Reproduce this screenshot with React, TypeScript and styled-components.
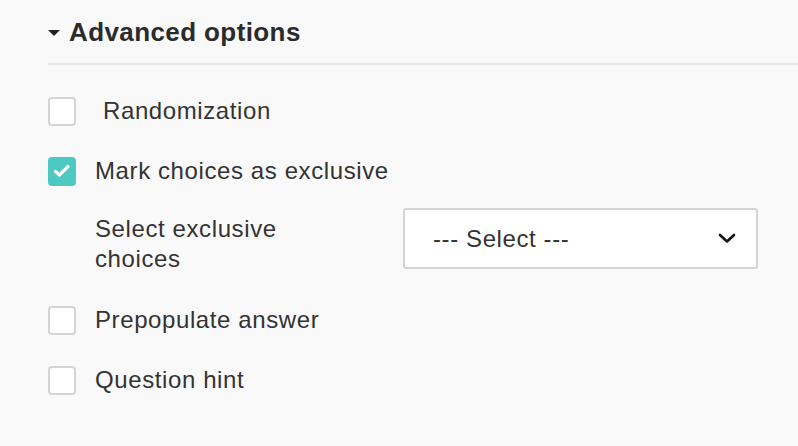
import React, { useState } from "react";
import styled, { createGlobalStyle } from "styled-components";

const Global = createGlobalStyle`
  html, body { margin: 0; padding: 0; background: #f9f9f9; }
  body { font-family: "Liberation Sans", Arial, Helvetica, sans-serif; color: #333; }
`;

const Panel = styled.div`
  padding: 17px 0 0 48px;
  width: 750px;
`;

const Header = styled.div`
  display: flex;
  align-items: center;
  gap: 9px;
  height: 30px;
  padding-bottom: 16px;
  border-bottom: 2px solid #e6e6e6;
`;

const Caret = styled.span`
  width: 0;
  height: 0;
  border-left: 6px solid transparent;
  border-right: 6px solid transparent;
  border-top: 6px solid #222;
  margin-top: 1px;
`;

const Title = styled.h3`
  margin: 0;
  font-size: 26px;
  letter-spacing: 0.4px;
  font-weight: bold;
  color: #2b2b2b;
`;

const List = styled.div`
  display: flex;
  flex-direction: column;
  padding-top: 31px;
`;

const Row = styled.label<{ $gap?: number; $mb?: number }>`
  display: flex;
  align-items: center;
  gap: ${(p) => p.$gap ?? 19}px;
  height: 30px;
  margin-bottom: ${(p) => p.$mb ?? 30}px;
  cursor: pointer;
  font-size: 24px;
  letter-spacing: 0.6px;
  color: #333;
`;

const Box = styled.span<{ $checked: boolean }>`
  width: 28px;
  height: 29px;
  box-sizing: border-box;
  border-radius: 4px;
  border: ${(p) => (p.$checked ? "none" : "2px solid #d4d4d4")};
  background: ${(p) => (p.$checked ? "#4dc8c2" : "#fff")};
  display: flex;
  align-items: center;
  justify-content: center;
  flex-shrink: 0;
`;

const SubRow = styled.div`
  display: grid;
  grid-template-columns: 220px 355px;
  column-gap: 88px;
  align-items: start;
  margin: 0 0 31px 47px;
`;

const SubLabel = styled.div`
  padding-top: 6px;
  font-size: 24px;
  letter-spacing: 0.6px;
  line-height: 30px;
  color: #333;
`;

const SelectBox = styled.div`
  height: 61px;
  box-sizing: border-box;
  border: 2px solid #d4d4d4;
  border-radius: 3px;
  background: #fff;
  display: flex;
  align-items: center;
  justify-content: space-between;
  padding: 0 20px 0 28px;
  font-size: 24px;
  letter-spacing: 0.6px;
  color: #333;
`;

const Check = () => (
  <svg width="18" height="14" viewBox="0 0 18 14">
    <path d="M2.5 7.5 L6.5 11 L15 2.5" fill="none" stroke="#fff" strokeWidth="3.2" strokeLinecap="round" strokeLinejoin="round" />
  </svg>
);

const Chevron = () => (
  <svg width="18" height="11" viewBox="0 0 18 11">
    <path d="M2 2 L9 8.5 L16 2" fill="none" stroke="#111" strokeWidth="2.6" strokeLinecap="round" strokeLinejoin="round" />
  </svg>
);

export default function App() {
  const [state, setState] = useState({ rand: false, excl: true, prep: false, hint: false });
  const toggle = (k: keyof typeof state) => setState((s) => ({ ...s, [k]: !s[k] }));
  return (
    <>
      <Global />
      <Panel>
        <Header>
          <Caret />
          <Title>Advanced options</Title>
        </Header>
        <List>
          <Row $gap={27} onClick={() => toggle("rand")}>
            <Box $checked={state.rand}>{state.rand && <Check />}</Box>
            Randomization
          </Row>
          <Row $mb={22} onClick={() => toggle("excl")}>
            <Box $checked={state.excl}>{state.excl && <Check />}</Box>
            Mark choices as exclusive
          </Row>
          <SubRow>
            <SubLabel>Select exclusive choices</SubLabel>
            <SelectBox>
              <span>--- Select ---</span>
              <Chevron />
            </SelectBox>
          </SubRow>
          <Row onClick={() => toggle("prep")}>
            <Box $checked={state.prep}>{state.prep && <Check />}</Box>
            Prepopulate answer
          </Row>
          <Row onClick={() => toggle("hint")}>
            <Box $checked={state.hint}>{state.hint && <Check />}</Box>
            Question hint
          </Row>
        </List>
      </Panel>
    </>
  );
}
